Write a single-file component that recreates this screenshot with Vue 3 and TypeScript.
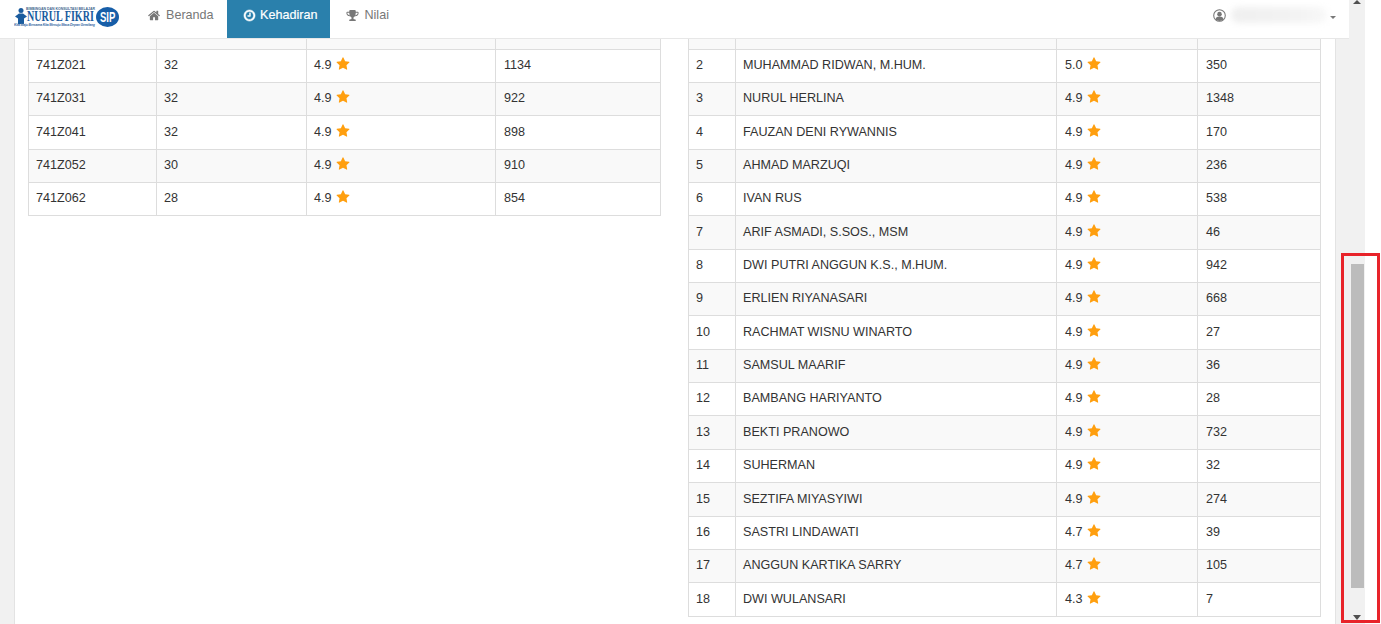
<script setup lang="ts">
const starPath =
  'M1728 647q0 22-26 48l-363 354 86 500q1 7 1 20 0 21-10.500 35.500t-30.500 14.500q-19 0-40-12l-449-236-449 236q-22 12-40 12-21 0-31.500-14.500t-10.500-35.500q0-6 2-20l86-500-364-354q-25-27-25-48 0-37 56-46l502-73 225-455q19-41 49-41t49 41l225 455 502 73q56 9 56 46z'

const classes = [
  ['741Z021', '32', '4.9', '1134'],
  ['741Z031', '32', '4.9', '922'],
  ['741Z041', '32', '4.9', '898'],
  ['741Z052', '30', '4.9', '910'],
  ['741Z062', '28', '4.9', '854'],
]

const teachers = [
  ['2', 'MUHAMMAD RIDWAN, M.HUM.', '5.0', '350'],
  ['3', 'NURUL HERLINA', '4.9', '1348'],
  ['4', 'FAUZAN DENI RYWANNIS', '4.9', '170'],
  ['5', 'AHMAD MARZUQI', '4.9', '236'],
  ['6', 'IVAN RUS', '4.9', '538'],
  ['7', 'ARIF ASMADI, S.SOS., MSM', '4.9', '46'],
  ['8', 'DWI PUTRI ANGGUN K.S., M.HUM.', '4.9', '942'],
  ['9', 'ERLIEN RIYANASARI', '4.9', '668'],
  ['10', 'RACHMAT WISNU WINARTO', '4.9', '27'],
  ['11', 'SAMSUL MAARIF', '4.9', '36'],
  ['12', 'BAMBANG HARIYANTO', '4.9', '28'],
  ['13', 'BEKTI PRANOWO', '4.9', '732'],
  ['14', 'SUHERMAN', '4.9', '32'],
  ['15', 'SEZTIFA MIYASYIWI', '4.9', '274'],
  ['16', 'SASTRI LINDAWATI', '4.7', '39'],
  ['17', 'ANGGUN KARTIKA SARRY', '4.7', '105'],
  ['18', 'DWI WULANSARI', '4.3', '7'],
]

const tables = [
  { key: 'classes', rows: classes, widths: [128, 150, 189, 165] },
  { key: 'teachers', rows: teachers, widths: [47, 321, 141, 123] },
]
</script>

<template>
  <div class="screen">
    <div class="page">
      <nav class="navbar">
        <svg class="logo" width="106" height="24" viewBox="0 0 106 24">
          <circle cx="7" cy="5.500" r="2.500" fill="#1b5c9e" />
          <path d="M1 11.500L5 8.500H9L13 11.500L10 13.500V19H4V13.500Z" fill="#1b5c9e" />
          <ellipse cx="93.500" cy="12" rx="11.500" ry="10" fill="#175ea8" />
          <text x="12" y="5" class="logo-top" textLength="69">BIMBINGAN DAN KONSULTASI BELAJAR</text>
          <text transform="translate(13 16) scale(.72 1)" class="logo-name">NURUL FIKRI</text>
          <text x="0" y="21" class="logo-motto" textLength="81">Kita Maju Bersama Kita Menuju Masa Depan Gemilang</text>
          <text transform="translate(86 17) scale(.68 1)" class="logo-sip">SIP</text>
        </svg>
        <ul class="nav-links">
          <li class="nav-link">
            <svg class="nav-icon" viewBox="0 0 1792 1792"><path d="M1408 992v480q0 26-19 45t-45 19h-384v-384h-256v384h-384q-26 0-45-19t-19-45v-480q0-1 .5-3t.5-3l575-474 575 474q1 2 1 6zm223-69l-62 74q-8 9-21 11h-3q-13 0-21-7l-692-577-692 577q-12 8-24 7-13-2-21-11l-62-74q-8-10-7-23.500t11-21.500l719-599q32-26 76-26t76 26l244 204v-195q0-14 9-23t23-9h192q14 0 23 9t9 23v408l219 182q10 8 11 21.500t-7 23.500z" /></svg>
            Beranda
          </li>
          <li class="nav-link nav-link--active">
            <svg class="nav-icon" viewBox="0 0 1792 1792"><path d="M1024 544v448q0 14-9 23t-23 9h-320q-14 0-23-9t-9-23v-64q0-14 9-23t23-9h224v-352q0-14 9-23t23-9h64q14 0 23 9t9 23zm416 352q0-148-73-273t-198-198-273-73-273 73-198 198-73 273 73 273 198 198 273 73 273-73 198-198 73-273zm224 0q0 209-103 385.500t-279.500 279.500-385.500 103-385.500-103-279.500-279.500-103-385.500 103-385.500 279.500-279.500 385.500-103 385.500 103 279.500 279.500 103 385.500z" /></svg>
            Kehadiran
          </li>
          <li class="nav-link">
            <svg class="nav-icon" viewBox="0 0 1792 1792"><path d="M522 883q-74-162-74-371h-256v96q0 78 94.500 162t235.500 113zm1078-275v-96h-256q0 209-74 371 141-29 235.500-113t94.500-162zm128-128v128q0 71-41.500 143t-112 130-173 97.500-215.500 44.500q-42 54-95 95-38 34-52.500 72.500t-14.500 89.500q0 54 30.500 91t97.500 37q75 0 133.500 45.500t58.500 114.500v64q0 14-9 23t-23 9h-832q-14 0-23-9t-9-23v-64q0-69 58.500-114.500t133.500-45.500q67 0 97.500-37t30.500-91q0-51-14.500-89.500t-52.500-72.500q-53-41-95-95-113-5-215.500-44.500t-173-97.500-112-130-41.500-143v-128q0-40 28-68t68-28h288v-96q0-66 47-113t113-47h576q66 0 113 47t47 113v96h288q40 0 68 28t28 68z" /></svg>
            Nilai
          </li>
        </ul>
        <div class="user">
          <svg class="user-icon" viewBox="0 0 24 24">
            <circle cx="12" cy="12" r="10.700" fill="none" stroke="#777" stroke-width="2" />
            <circle cx="12" cy="9.500" r="4.200" fill="#777" />
            <path d="M4.500 19c1-3.600 3.800-5 7.500-5s6.500 1.400 7.500 5c-2 2-4.500 3-7.500 3s-5.500-1-7.500-3z" fill="#777" />
          </svg>
          <span class="user-name"></span>
          <span class="caret"></span>
        </div>
      </nav>

      <div class="body">
        <main class="content">
          <table
            v-for="table in tables"
            :key="table.key"
            class="data-table"
            :class="'data-table--' + table.key"
          >
            <colgroup>
              <col v-for="(w, i) in table.widths" :key="i" :style="{ width: w + 'px' }" />
            </colgroup>
            <tbody>
              <tr class="cut-row"><td></td><td></td><td></td><td></td></tr>
              <tr v-for="row in table.rows" :key="row[0]">
                <td>{{ row[0] }}</td>
                <td>{{ row[1] }}</td>
                <td>
                  {{ row[2] }}
                  <svg class="star" viewBox="0 0 1792 1792"><path :d="starPath" /></svg>
                </td>
                <td>{{ row[3] }}</td>
              </tr>
            </tbody>
          </table>
        </main>
      </div>
    </div>

    <div class="scrollbar">
      <span class="arrow arrow--up"></span>
      <div class="thumb"></div>
      <span class="arrow arrow--down"></span>
    </div>

    <div class="highlight"></div>
  </div>
</template>

<style>
html,
body {
  margin: 0;
  height: 100%;
  overflow: hidden;
  background: #fff;
}
</style>

<style scoped>
.screen {
  position: relative;
  display: flex;
  width: 1381px;
  height: 624px;
  overflow: hidden;
  font-family: "Liberation Sans", Arial, sans-serif;
  font-size: 12.600px;
  color: #333;
}

.page {
  display: flex;
  flex-direction: column;
  width: 1351px;
  height: 624px;
  background: #f1f1f1;
}

.navbar {
  display: flex;
  align-items: stretch;
  flex: none;
  width: 1349px;
  height: 38px;
  background: #fff;
  border-bottom: 1px solid #e7e7e7;
}

.logo {
  flex: none;
  margin: 5px 0 0 14px;
}

.logo-top {
  font: 700 3.500px "Liberation Sans", sans-serif;
  fill: #44688f;
}

.logo-name {
  font: 700 14px "Liberation Serif", serif;
  fill: #1b5c9e;
}

.logo-motto {
  font: italic 700 3.500px "Liberation Sans", sans-serif;
  fill: #3b6ea5;
}

.logo-sip {
  font: 700 14px "Liberation Sans", sans-serif;
  fill: #fff;
}

.nav-links {
  display: flex;
  margin: 0 0 0 12px;
  padding: 0;
  list-style: none;
}

.nav-link {
  display: flex;
  align-items: flex-start;
  gap: 5px;
  padding: 7px 13.400px 0 16px;
  color: #777;
  line-height: 16px;
}

.nav-link--active {
  gap: 4px;
  padding-right: 13px;
  background: #2a80ac;
  color: #fff;
  -webkit-text-stroke: 0.200px #fff;
}

.nav-icon {
  width: 13px;
  height: 13px;
  margin-top: 2px;
  fill: currentColor;
}

.nav-link--active .nav-icon {
  stroke: currentColor;
  stroke-width: 70;
}

.user {
  display: flex;
  align-items: flex-start;
  margin-left: auto;
  padding: 9px 13px 0 0;
}

.user-icon {
  width: 13px;
  height: 13px;
}

.user-name {
  width: 96px;
  height: 16px;
  margin: -2px 0 0 5px;
  background: linear-gradient(90deg, #efefef, #f3f3f3 70%, #f8f8f8);
  border-radius: 8px;
  filter: blur(3px);
}

.caret {
  width: 0;
  height: 0;
  margin: 7px 0 0 3px;
  border-top: 3px solid #777;
  border-left: 3px solid transparent;
  border-right: 3px solid transparent;
}

.body {
  flex: 1;
  min-height: 0;
  padding: 0 15px 0 14px;
}

.content {
  display: grid;
  grid-template-columns: 633px 633px;
  column-gap: 27px;
  align-items: start;
  height: 100%;
  padding: 0 14px 0 13px;
  width: 1293px;
  background: #fff;
  border-left: 1px solid #e3e3e3;
  border-right: 1px solid #e3e3e3;
}

.data-table {
  table-layout: fixed;
  width: 633px;
  border-collapse: collapse;
  line-height: 16px;
}

.data-table td {
  height: 33.370px;
  box-sizing: border-box;
  padding: 0 8px 1.600px 7px;
  border: 1px solid #ddd;
}

.data-table td:last-child,
.data-table--teachers td:nth-child(3) {
  padding-left: 8px;
}

.data-table tr:nth-child(odd) td {
  background: #f9f9f9;
}

.data-table .cut-row td {
  height: 10px;
  padding: 0;
  border-top: 0;
}

.star {
  width: 14px;
  height: 14px;
  margin-left: 1px;
  vertical-align: -2px;
  fill: #ff9f0f;
}

.scrollbar {
  position: relative;
  flex: none;
  width: 14px;
  height: 624px;
  box-sizing: border-box;
  padding-top: 264px;
  background: #f1f1f1;
}

.thumb {
  width: 13px;
  height: 324px;
  background: #bcbcbc;
}

.arrow {
  position: absolute;
  left: 2px;
  width: 0;
  height: 0;
  border-left: 4px solid transparent;
  border-right: 4px solid transparent;
}

.arrow--up {
  top: 0;
  border-bottom: 4px solid #505050;
}

.arrow--down {
  top: 615px;
  border-top: 5px solid #505050;
}

/* red annotation drawn over the scrollbar */
.highlight {
  position: absolute;
  left: 1341px;
  top: 253px;
  width: 39px;
  height: 370px;
  box-sizing: border-box;
  border: 3px solid #e8232a;
}
</style>
